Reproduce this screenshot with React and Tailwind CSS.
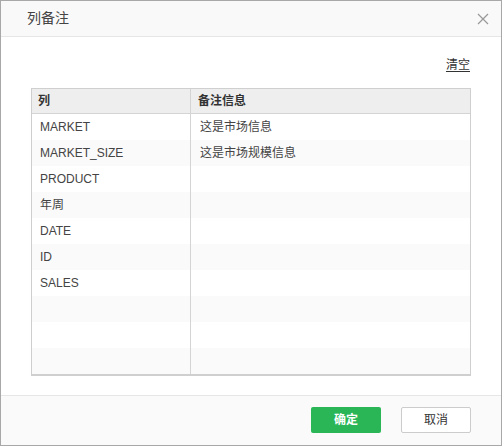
import React from "react";

const rows = [
  { col: "MARKET", note: "这是市场信息" },
  { col: "MARKET_SIZE", note: "这是市场规模信息" },
  { col: "PRODUCT", note: "" },
  { col: "年周", note: "" },
  { col: "DATE", note: "" },
  { col: "ID", note: "" },
  { col: "SALES", note: "" },
  { col: "", note: "" },
  { col: "", note: "" },
  { col: "", note: "" },
];

const ColumnNoteDialog = () => {
  return (
    <div className="w-[502px] h-[446px] bg-white border border-[#a8a8a8] flex flex-col font-['Liberation_Sans','Noto_Sans_CJK_SC',sans-serif] text-[#333]">
      {/* Header */}
      <div className="h-[36px] shrink-0 bg-[#f9f9f9] border-b border-[#e6e6e6] flex items-center justify-between pl-[26px] pr-[12px]">
        <span className="text-[14px] text-[#444]">列备注</span>
        <svg width="12" height="12" viewBox="0 0 12 12" className="text-[#999]">
          <path d="M1 1L11 11M11 1L1 11" stroke="currentColor" strokeWidth="1.2" />
        </svg>
      </div>

      {/* Body */}
      <div className="flex-1 px-[30px] pt-[19px]">
        <div className="flex justify-end pr-[1px]">
          <span className="text-[12px] underline underline-offset-2 leading-[18px]">清空</span>
        </div>
        <div className="mt-[14px] w-[440px] border border-[#cfcfcf] border-b-2">
          <div className="flex h-[25px] bg-[#eeeeee] border-b border-[#d4d4d4] text-[12px] font-bold">
            <div className="w-[159px] border-r border-[#d4d4d4] pl-[6px] flex items-center">列</div>
            <div className="flex-1 pl-[7px] flex items-center">备注信息</div>
          </div>
          {rows.map((r, i) => (
            <div
              key={i}
              className={`flex h-[26px] text-[12px] text-[#444] ${i % 2 === 1 ? "bg-[#fafafa]" : "bg-white"}`}
            >
              <div className="w-[159px] border-r border-[#d4d4d4] pl-[8px] flex items-center">{r.col}</div>
              <div className="flex-1 pl-[9px] flex items-center">{r.note}</div>
            </div>
          ))}
        </div>
      </div>

      {/* Footer */}
      <div className="h-[50px] shrink-0 bg-[#fafafa] border-t border-[#e6e6e6] flex items-center justify-end gap-[20px] pr-[30px] pb-[2px]">
        <button className="w-[70px] h-[26px] rounded-[2px] bg-[#2ab657] text-white text-[12px] font-bold">确定</button>
        <button className="w-[70px] h-[26px] rounded-[2px] bg-white border border-[#cccccc] text-[#333] text-[12px]">取消</button>
      </div>
    </div>
  );
};

export default ColumnNoteDialog;
